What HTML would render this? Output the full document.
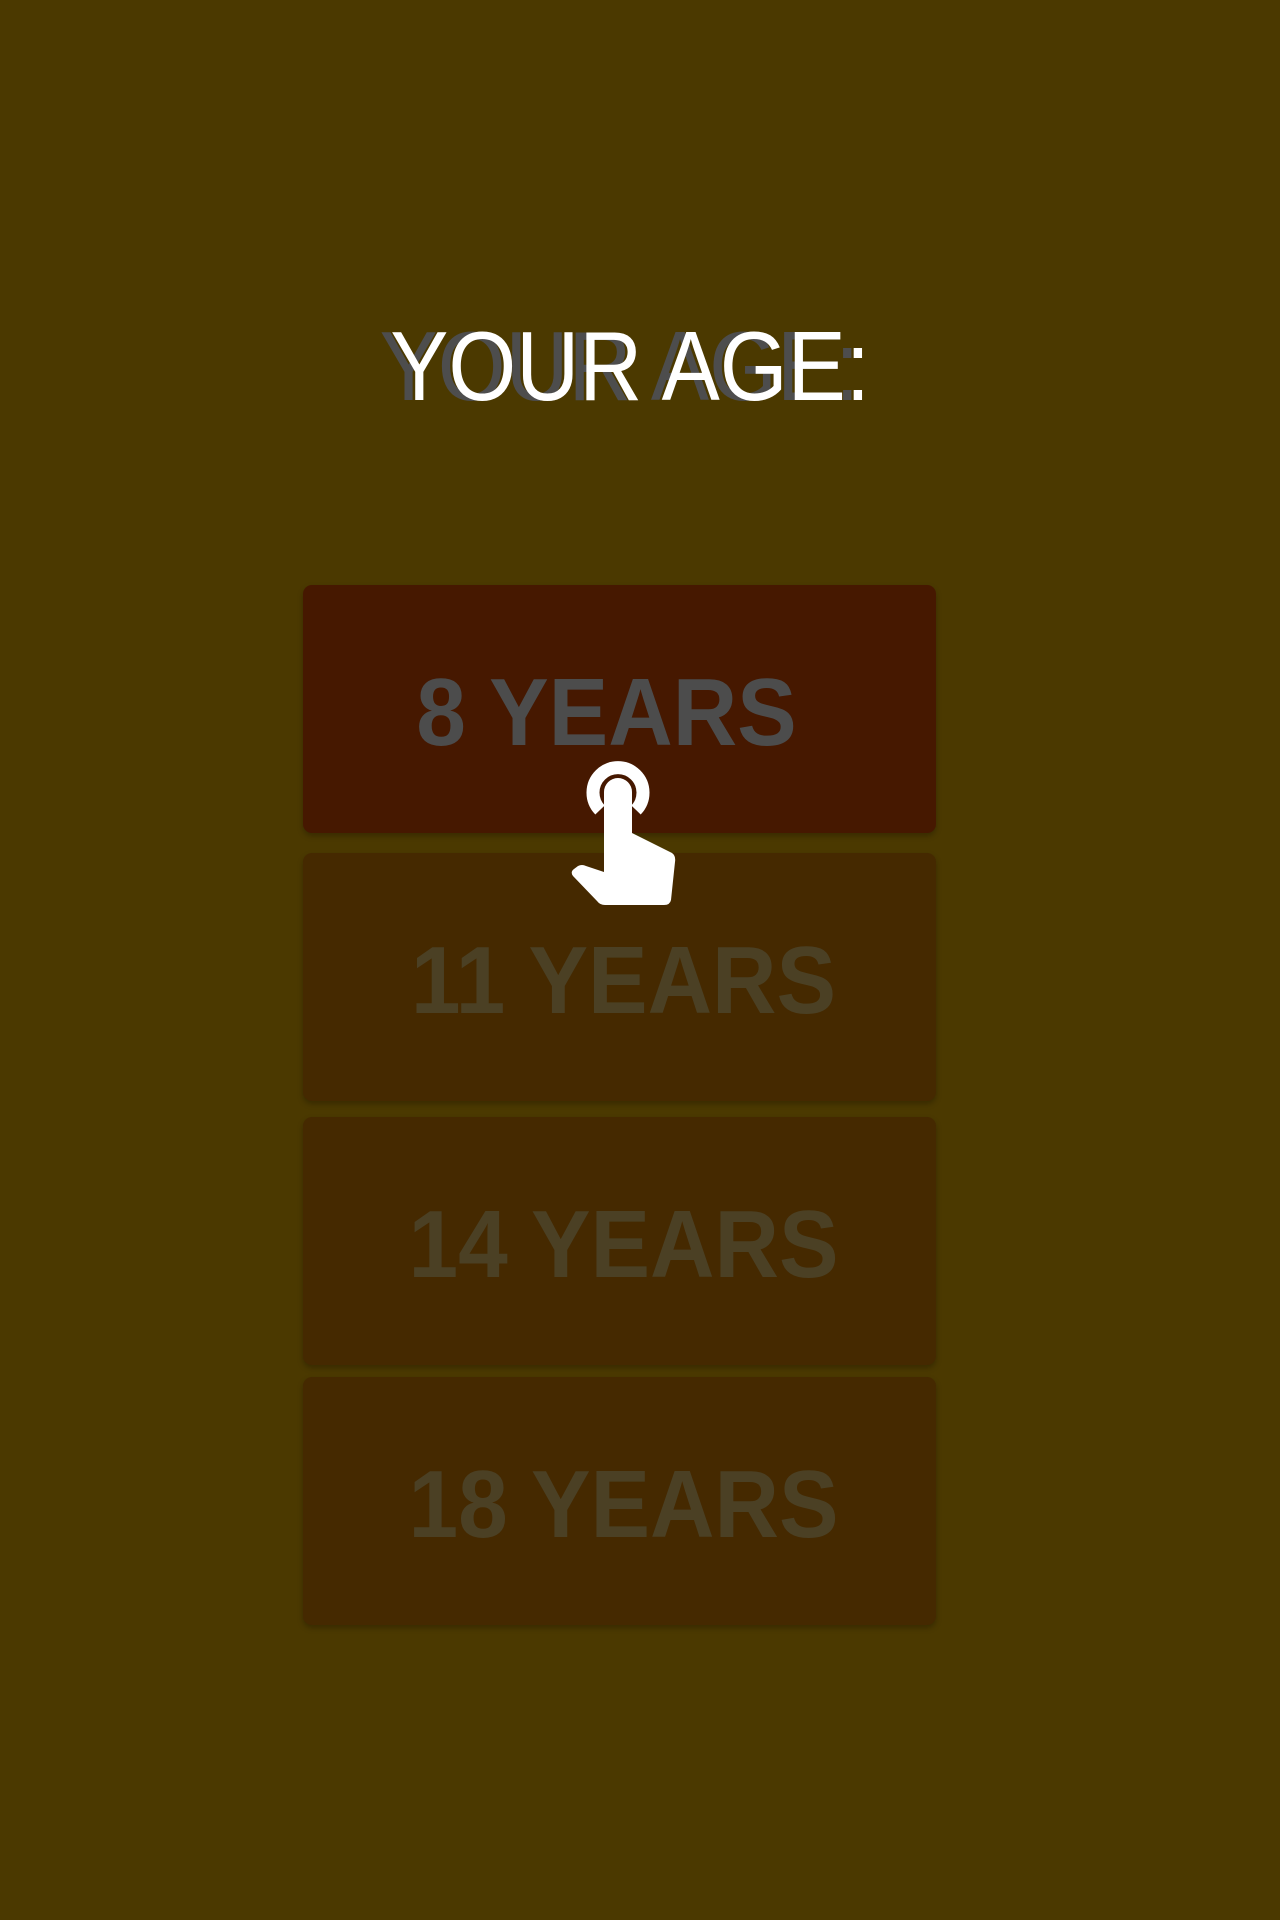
<!DOCTYPE html>
<html><head><meta charset="utf-8"><style>
html,body{margin:0;padding:0}
body{width:1280px;height:1920px;background:#4b3900;position:relative;overflow:hidden;font-family:"Liberation Sans",sans-serif}
.title{position:absolute;top:316px;left:-9px;width:1280px;text-align:center;font-size:98px;line-height:100px;color:#fff;transform:scaleX(0.89);transform-origin:632px 0;text-shadow:-12px 0 0 #4d4d4d}
.btn{position:absolute;left:303px;width:633px;height:248px;border-radius:9px;background:#452900;box-shadow:0 3px 6px rgba(0,0,0,0.25)}
.btn span{position:absolute;left:4px;width:100%;top:78px;text-align:center;font-weight:bold;font-size:96px;line-height:100px;color:#4b4024;transform:scaleX(0.93)}
.b1{background:#461800}
.b1 span{color:#4c4c4c;left:-13px}
</style></head><body>
<div class="title">YOUR AGE:</div>
<div class="btn b1" style="top:585px"><span>8 YEARS</span></div>
<div class="btn" style="top:853px"><span>11 YEARS</span></div>
<div class="btn" style="top:1117px"><span>14 YEARS</span></div>
<div class="btn" style="top:1377px"><span>18 YEARS</span></div>
<svg width="1280" height="1920" style="position:absolute;left:0;top:0">
<path d="M600 810 A25 25 0 1 1 636 810" fill="none" stroke="#fff" stroke-width="13"/>
<path d="M604 792 a14 14 0 0 1 28 0 V833 L672 853 Q676 856 675 862 L671 900 Q670 905 664 905 H605 Q600 905 597 901 L573 876 Q570 872 574 869 L578 866 Q582 864 586 866 L604 872 Z" fill="#fff"/>
</svg>
</body></html>
